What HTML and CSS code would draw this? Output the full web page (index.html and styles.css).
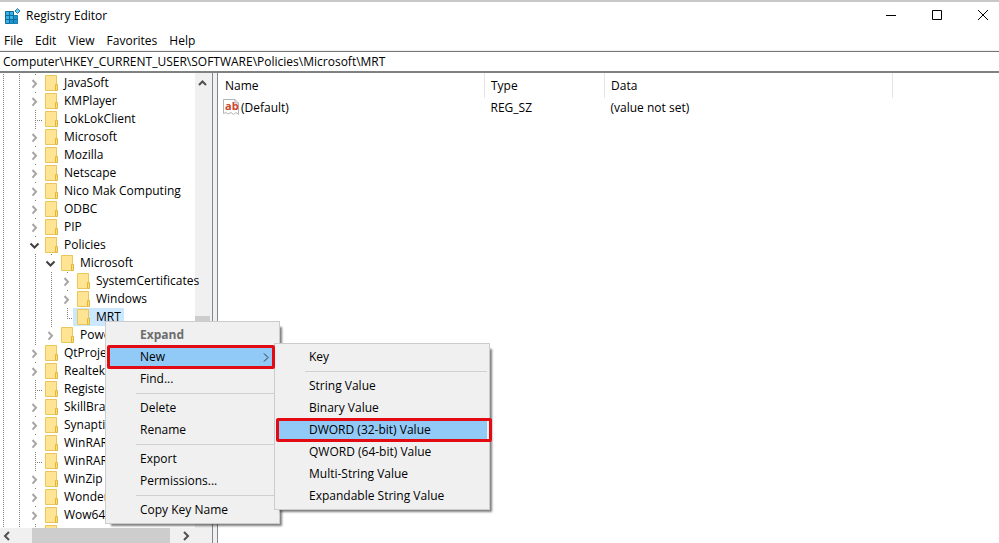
FILE: index.html
```html
<!DOCTYPE html>
<html lang="en">
<head>
<meta charset="utf-8">
<title>Registry Editor</title>
<link rel="stylesheet" href="styles.css">
</head>
<body>

<svg class="defs" width="0" height="0">
  <symbol id="folder" viewBox="0 0 13 16">
    <path d="M0.5 0.5H11.5V15.5H0.5Z" fill="#ffe493" stroke="#e9c75c"/>
    <path d="M10.5 9.5H12.5V15.5H10.5Z" fill="#ffdb70" stroke="#e0b840"/>
  </symbol>
  <symbol id="closed" viewBox="0 0 16 18">
    <path d="M5.5 6L9 9.8L5.5 13.6" fill="none" stroke="#a6a6a6" stroke-width="2"/>
  </symbol>
  <symbol id="opened" viewBox="0 0 16 18">
    <path d="M3.5 7.5L7.5 11.5L11.5 7.5" fill="none" stroke="#404040" stroke-width="2"/>
  </symbol>
</svg>

<header class="titlebar">
  <svg class="app-icon" width="17" height="17" viewBox="0 0 17 17">
    <path d="M1.5 3.5H9.5V7.5H13.5V15.5H1.5Z" fill="#35b5ea" stroke="#156a94"/>
    <path d="M9.5 7.5H13.5V15.5H5.5V11.5H9.5Z" fill="#1c93d2"/>
    <path d="M5.5 4V15M9.5 7V15M2 7.5H9M2 11.5H13" stroke="#156a94" fill="none"/>
    <path d="M13.5 0.5L16 3L13.5 5.5L11 3Z" fill="#6fc8ee" stroke="#2a7ca6"/>
  </svg>
  <h1>Registry Editor</h1>
  <div class="window-buttons">
    <button type="button" aria-label="Minimize"><svg width="10" height="10"><path d="M0 5.5H10"/></svg></button>
    <button type="button" aria-label="Maximize"><svg width="10" height="10"><path d="M0.5 0.5H9.5V9.5H0.5Z"/></svg></button>
    <button type="button" aria-label="Close"><svg width="10" height="10"><path d="M0 0L10 10M10 0L0 10"/></svg></button>
  </div>
</header>

<nav class="menubar">
  <button type="button">File</button>
  <button type="button">Edit</button>
  <button type="button">View</button>
  <button type="button">Favorites</button>
  <button type="button">Help</button>
</nav>

<input class="address" type="text" aria-label="Address" value="Computer\HKEY_CURRENT_USER\SOFTWARE\Policies\Microsoft\MRT">

<main class="panes">
  <section class="tree-pane">
    <div class="tree-area">
      <ul class="tree" id="tree"></ul>
      <div class="vscroll">
        <svg width="16" height="18" viewBox="0 0 16 18"><path d="M4 12L7.5 8.5L11 12"/></svg>
        <div class="vthumb"></div>
      </div>
    </div>
    <div class="hscroll">
      <svg width="32" height="15" viewBox="0 0 32 15"><path d="M9 4L5 8L9 12"/></svg>
      <div class="hthumb"></div>
      <svg width="25" height="15" viewBox="0 0 25 15"><path d="M14 4L18 8L14 12"/></svg>
    </div>
  </section>

  <section class="values">
    <table>
      <thead>
        <tr><th class="col-name">Name</th><th class="col-type">Type</th><th class="col-data">Data</th><th></th></tr>
      </thead>
      <tbody>
        <tr>
          <td class="name-cell">
            <svg class="value-icon" width="16" height="16" viewBox="0 0 16 16">
              <path d="M0.5 0.5H12L15.5 4V15.5L13 13.5L10.5 15.5L8 13.5L5 15L3 13.5L0.5 14.5Z" fill="#fff" stroke="#b4b4b4"/>
              <path d="M12 0.5V4H15.5" fill="none" stroke="#b4b4b4"/>
              <text x="2" y="11">ab</text>
            </svg>(Default)
          </td>
          <td>REG_SZ</td>
          <td>(value not set)</td>
          <td></td>
        </tr>
      </tbody>
    </table>
  </section>
</main>

<div class="menu context-menu" role="menu">
  <button type="button" role="menuitem" class="default" disabled>Expand</button>
  <button type="button" role="menuitem" class="active">New
    <svg width="6" height="9" viewBox="0 0 6 9"><path d="M1 0.5L5 4.5L1 8.5"/></svg>
  </button>
  <button type="button" role="menuitem">Find...</button>
  <hr>
  <button type="button" role="menuitem">Delete</button>
  <button type="button" role="menuitem">Rename</button>
  <hr>
  <button type="button" role="menuitem">Export</button>
  <button type="button" role="menuitem">Permissions...</button>
  <hr>
  <button type="button" role="menuitem">Copy Key Name</button>
</div>

<div class="menu submenu" role="menu">
  <button type="button" role="menuitem">Key</button>
  <hr>
  <button type="button" role="menuitem">String Value</button>
  <button type="button" role="menuitem">Binary Value</button>
  <button type="button" role="menuitem" class="active">DWORD (32-bit) Value</button>
  <button type="button" role="menuitem">QWORD (64-bit) Value</button>
  <button type="button" role="menuitem">Multi-String Value</button>
  <button type="button" role="menuitem">Expandable String Value</button>
</div>

<script src="tree.js"></script>
</body>
</html>
```
FILE: styles.css
```css
body {
  margin: 0;
  height: 100vh;
  display: flex;
  flex-direction: column;
  box-sizing: border-box;
  border-top: 2px solid #c8c8c8;
  overflow: hidden;
  background: #fff;
  color: #000;
  font: 12px/18px "Open Sans", "Noto Sans", sans-serif;
}

button, input {
  font: inherit;
  color: inherit;
  border: 0;
  padding: 0;
  background: none;
}

.defs {
  position: absolute;
}

/* title bar and menus */
.titlebar {
  display: flex;
  align-items: center;
  height: 28px;
  padding-left: 4px;
}

.titlebar h1 {
  margin: 0 0 0 5px;
  font-size: 12px;
  font-weight: normal;
}

.window-buttons {
  display: flex;
  gap: 14px;
  margin-left: auto;
}

.window-buttons button {
  width: 32px;
  height: 28px;
}

.window-buttons path {
  fill: none;
  stroke: #000;
}

.menubar {
  display: flex;
  gap: 12px;
  height: 19px;
  padding: 1px 4px 0;
  border-bottom: 1px solid #f0f0f0;
}

.address {
  height: 22px;
  box-sizing: border-box;
  padding: 0 3px;
  border-top: 1px solid #777;
  border-bottom: 2px solid #7f8283;
}

.panes {
  flex: 1;
  display: flex;
  min-height: 0;
  background: linear-gradient(#f0f0f0, #f0f0f0) 213px 0 / 4px 100% no-repeat;
}

/* key tree */
.tree-pane {
  width: 212px;
  display: flex;
  flex-direction: column;
  border-right: 1px solid #828790;
}

.tree-area {
  flex: 1;
  display: flex;
  min-height: 0;
  isolation: isolate;
}

.tree {
  flex: 1;
  min-width: 0;
  margin: 0 0 0 -5px;
  padding: 1px 0 0;
  list-style: none;
  overflow: visible clip;
  z-index: 1;
}

.tree li {
  display: flex;
  height: 18px;
  white-space: nowrap;
}

.guide, .twisty {
  flex: none;
  width: 16px;
  height: 18px;
}

.guide {
  background: repeating-linear-gradient(#808080 0 1px, transparent 1px 2px) 8px 0 / 1px 100% no-repeat;
}

.twisty svg {
  display: block;
  background: linear-gradient(#808080, #808080) 8px 0 / 1px 1px no-repeat;
}

.leaf {
  background:
    repeating-linear-gradient(#808080 0 1px, transparent 1px 2px) 8px 0 / 1px 100% no-repeat,
    repeating-linear-gradient(90deg, #808080 0 1px, transparent 1px 2px) 8px 10px / 8px 1px no-repeat;
}

.leaf.last {
  background-size: 1px 10px, 8px 1px;
}

.key {
  display: flex;
  margin-left: -2px;
  padding: 0 3px 0 4px;
}

.key svg {
  margin: 1px 6px 0 0;
}

.selected .key {
  background: #cce8ff;
}

.vscroll {
  width: 17px;
  background: #f0f0f0;
  display: flex;
  flex-direction: column;
}

.vthumb {
  width: 15px;
  height: 40px;
  margin-top: 225px;
  background: #cdcdcd;
}

.hscroll {
  display: flex;
  height: 15px;
  background: #f0f0f0;
}

.hthumb {
  width: 138px;
  background: #cdcdcd;
}

.vscroll path, .hscroll path {
  fill: none;
  stroke: #505050;
  stroke-width: 2;
}

/* value list */
.values {
  flex: 1;
  margin-left: 4px;
  border-left: 1px solid #828790;
}

table {
  width: 100%;
  table-layout: fixed;
  border-collapse: collapse;
}

th, td {
  padding: 0 6px;
  text-align: left;
  font-weight: normal;
}

th {
  height: 25px;
  border-right: 1px solid #e5e5e5;
}

th:first-child {
  padding-left: 7px;
}

th:last-child {
  border-right: 0;
}

td {
  padding-top: 1px;
}

.col-name { width: 253px; }
.col-type { width: 107px; }
.col-data { width: 275px; }

.name-cell {
  display: flex;
  padding-left: 5px;
}

.value-icon {
  margin-right: 2px;
}

.value-icon text {
  font: bold 11px "Open Sans", sans-serif;
  fill: #c8452b;
}

/* popup menus */
.menu {
  position: absolute;
  box-sizing: border-box;
  padding: 2px;
  border: 1px solid #ccc;
  background: #f0f0f0;
  box-shadow: 4px 4px 2px -2px rgba(0, 0, 0, 0.5);
}

.context-menu {
  left: 105px;
  top: 321px;
  width: 175px;
}

.submenu {
  left: 274px;
  top: 343px;
  width: 216px;
}

.menu button {
  display: flex;
  align-items: center;
  justify-content: space-between;
  width: 100%;
  height: 22px;
  padding: 0 8px 0 32px;
  text-align: left;
}

.menu hr {
  height: 1px;
  margin: 3px 0 3px 28px;
  border: 0;
  background: #d0d0d0;
}

.menu .default {
  color: #6d6d6d;
  font-weight: bold;
}

.menu .active {
  position: relative;
  background: #91c9f7;
}

/* red marker round the chosen entry */
.menu .active::after {
  content: "";
  position: absolute;
  z-index: 2;
  inset: -1px 2px -1px -1px;
  border: 3px solid #e30b13;
  border-radius: 2px;
}

.submenu .active::after {
  right: -5px;
}

.menu path {
  fill: none;
  stroke: #333;
}
```
FILE: tree.js
```javascript
// [depth, name, state]; depth counts guide columns before the toggle
var keys = [
  [2, 'JavaSoft', 'closed'],
  [2, 'KMPlayer', 'closed'],
  [2, 'LokLokClient', 'leaf'],
  [2, 'Microsoft', 'closed'],
  [2, 'Mozilla', 'closed'],
  [2, 'Netscape', 'closed'],
  [2, 'Nico Mak Computing', 'closed'],
  [2, 'ODBC', 'closed'],
  [2, 'PIP', 'closed'],
  [2, 'Policies', 'opened'],
  [3, 'Microsoft', 'opened'],
  [4, 'SystemCertificates', 'closed'],
  [4, 'Windows', 'closed'],
  [4, 'MRT', 'leaf last'],
  [3, 'Power', 'closed'],
  [2, 'QtProject', 'closed'],
  [2, 'Realtek', 'closed'],
  [2, 'Registered', 'leaf'],
  [2, 'SkillBrains', 'closed'],
  [2, 'Synaptics', 'closed'],
  [2, 'WinRAR', 'closed'],
  [2, 'WinRAR SFX', 'leaf'],
  [2, 'WinZip', 'closed'],
  [2, 'Wonder', 'closed'],
  [2, 'Wow6432Node', 'closed'],
  [2, '', 'leaf']
];

document.getElementById('tree').innerHTML = keys.map(function (k) {
  var leaf = k[2].indexOf('leaf') === 0;
  var guides = '<span class="guide"></span>'.repeat(k[0]);
  var toggle = leaf
    ? '<span class="twisty ' + k[2] + '"></span>'
    : '<button type="button" class="twisty" aria-label="Toggle ' + k[1] + '"><svg width="16" height="18"><use href="#' + k[2] + '"/></svg></button>';
  return '<li' + (k[1] === 'MRT' ? ' class="selected"' : '') + '>' + guides + toggle +
    '<span class="key"><svg width="13" height="16"><use href="#folder"/></svg>' + k[1] + '</span></li>';
}).join('');
```
